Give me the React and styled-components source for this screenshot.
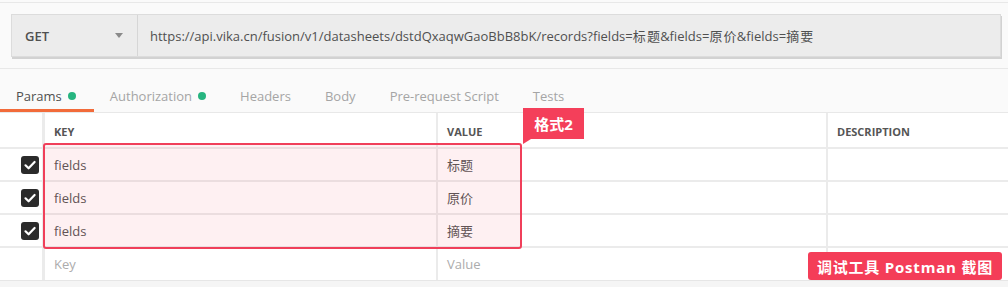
import styled, { createGlobalStyle } from 'styled-components';

const GlobalStyle = createGlobalStyle`
  body {
    margin: 0;
    background: #f5f5f5;
    font-family: "Open Sans", "Noto Sans CJK SC", sans-serif;
  }
`;

const tabs = [
  { label: 'Params', active: true, dot: true },
  { label: 'Authorization', dot: true },
  { label: 'Headers' },
  { label: 'Body' },
  { label: 'Pre-request Script' },
  { label: 'Tests' },
];

const rows = [
  { key: 'fields', value: '标题' },
  { key: 'fields', value: '原价' },
  { key: 'fields', value: '摘要' },
];

function Check() {
  return (
    <svg width="18" height="18" viewBox="0 0 18 18">
      <rect width="18" height="18" rx="3" fill="#2b2b2b" />
      <path
        d="M4.5 9.3 L7.6 12.3 L13.6 6"
        fill="none"
        stroke="#fff"
        strokeWidth="2.2"
        strokeLinecap="round"
        strokeLinejoin="round"
      />
    </svg>
  );
}

export default function App() {
  return (
    <Page>
      <GlobalStyle />
      <Top>
        <UrlBar>
          <Method>
            GET
            <Caret />
          </Method>
          <Url>
            https://api.vika.cn/fusion/v1/datasheets/dstdQxaqwGaoBbB8bK/records?fields=<Cjk>标题</Cjk>&amp;fields=<Cjk>原价</Cjk>&amp;fields=<Cjk>摘要</Cjk>
          </Url>
        </UrlBar>
        <TabBar>
          {tabs.map((t) => (
            <Tab key={t.label} $active={t.active}>
              {t.label}
              {t.dot && <Dot />}
            </Tab>
          ))}
        </TabBar>
      </Top>
      <Table>
        <Row $head>
          <Cell />
          <HeadCell>KEY</HeadCell>
          <HeadCell>VALUE</HeadCell>
          <HeadCell>DESCRIPTION</HeadCell>
        </Row>
        {rows.map((r, i) => (
          <Row key={i}>
            <CheckCell>
              <Check />
            </CheckCell>
            <Cell>{r.key}</Cell>
            <Cell>{r.value}</Cell>
            <Cell />
          </Row>
        ))}
        <Row $last>
          <Cell />
          <Cell $placeholder>Key</Cell>
          <Cell $placeholder>Value</Cell>
          <Cell />
        </Row>
        <Highlight />
        <Label>格式2</Label>
        <Badge>调试工具 Postman 截图</Badge>
      </Table>
    </Page>
  );
}

const Page = styled.div`
  min-height: 287px;
  background: #f5f5f5;
`;

const Top = styled.div`
  padding-top: 2px;
  background: #fafafa;
  &::before {
    content: '';
    display: block;
    height: 11px;
    border-top: 1px solid #e8e8e8;
  }
`;

const UrlBar = styled.div`
  display: flex;
  height: 41px;
  margin: 0 7px 0 11px;
  background: #ececec;
  border: 1px solid #dcdcdc;
  box-shadow: 1px 2px 0 #d2d2d2;
`;

const Method = styled.div`
  display: flex;
  align-items: center;
  justify-content: space-between;
  width: 126px;
  box-sizing: border-box;
  padding: 0 14px 0 13px;
  border-right: 1px solid #d6d6d6;
  font-size: 13px;
  font-weight: 600;
  color: #505050;
`;

const Caret = styled.span`
  width: 0;
  height: 0;
  border-left: 4px solid transparent;
  border-right: 4px solid transparent;
  border-top: 5px solid #8a8a8a;
`;

const Url = styled.div`
  display: flex;
  align-items: center;
  padding-left: 12px;
  font-size: 13px;
  color: #505050;
  white-space: nowrap;
`;

const Cjk = styled.span`
  letter-spacing: 1.2px;
  margin-right: -1px;
`;

const TabBar = styled.div`
  display: flex;
  height: 43px;
  margin-top: 11px;
  border-top: 1px solid #e8e8e8;
`;

const Tab = styled.div`
  display: flex;
  align-items: center;
  padding: 13px 18px 0 16px;
  font-size: 13px;
  color: ${(p) => (p.$active ? '#505050' : '#a5a5a5')};
  border-bottom: 3px solid ${(p) => (p.$active ? '#f26b3a' : 'transparent')};
`;

const Dot = styled.span`
  width: 8px;
  height: 8px;
  margin-left: 6px;
  border-radius: 50%;
  background: #26b47f;
`;

const Table = styled.div`
  position: relative;
  background: #fff;
  border-top: 1px solid #e8e8e8;
  border-bottom: 1px solid #e6e6e6;
`;

const Row = styled.div`
  display: grid;
  grid-template-columns: 45px 393px 390px 1fr;
  height: ${(p) => (p.$head ? '36px' : p.$last ? '32px' : '33px')};
  box-sizing: border-box;
  border-bottom: ${(p) => (p.$last ? 'none' : '2px solid #ebebeb')};
`;

const Cell = styled.div`
  display: flex;
  align-items: center;
  padding-left: 9px;
  font-size: 13px;
  color: ${(p) => (p.$placeholder ? '#acacac' : '#555')};
  border-right: 2px solid #ebebeb;
  &:first-child {
    border-right-width: 3px;
    padding-left: 0;
  }
  &:last-child {
    border-right: none;
  }
`;

const HeadCell = styled(Cell)`
  font-size: 11px;
  font-weight: 700;
  color: #555;
  padding-top: 2px;
`;

const CheckCell = styled(Cell)`
  justify-content: flex-end;
  padding-right: 3px;
`;

const Highlight = styled.div`
  position: absolute;
  left: 43px;
  top: 30px;
  width: 479px;
  height: 106px;
  box-sizing: border-box;
  border: 2px solid #f03f5a;
  border-radius: 3px;
  background: rgba(240, 65, 90, 0.08);
  pointer-events: none;
`;

const Label = styled.div`
  position: absolute;
  left: 523px;
  top: -5px;
  width: 61px;
  height: 31px;
  display: flex;
  align-items: center;
  justify-content: center;
  background: #f43f5a;
  color: #fff;
  font-size: 15px;
  font-weight: 700;
  &::after {
    content: '';
    position: absolute;
    left: 0;
    bottom: -5px;
    border-top: 5px solid #f43f5a;
    border-right: 8px solid transparent;
  }
`;

const Badge = styled.div`
  position: absolute;
  right: 6px;
  top: 139px;
  height: 28px;
  padding: 0 9px;
  display: flex;
  align-items: center;
  border-radius: 3px;
  background: #f43d58;
  color: #fff;
  font-size: 15px;
  font-weight: 700;
  letter-spacing: 0.8px;
`;
